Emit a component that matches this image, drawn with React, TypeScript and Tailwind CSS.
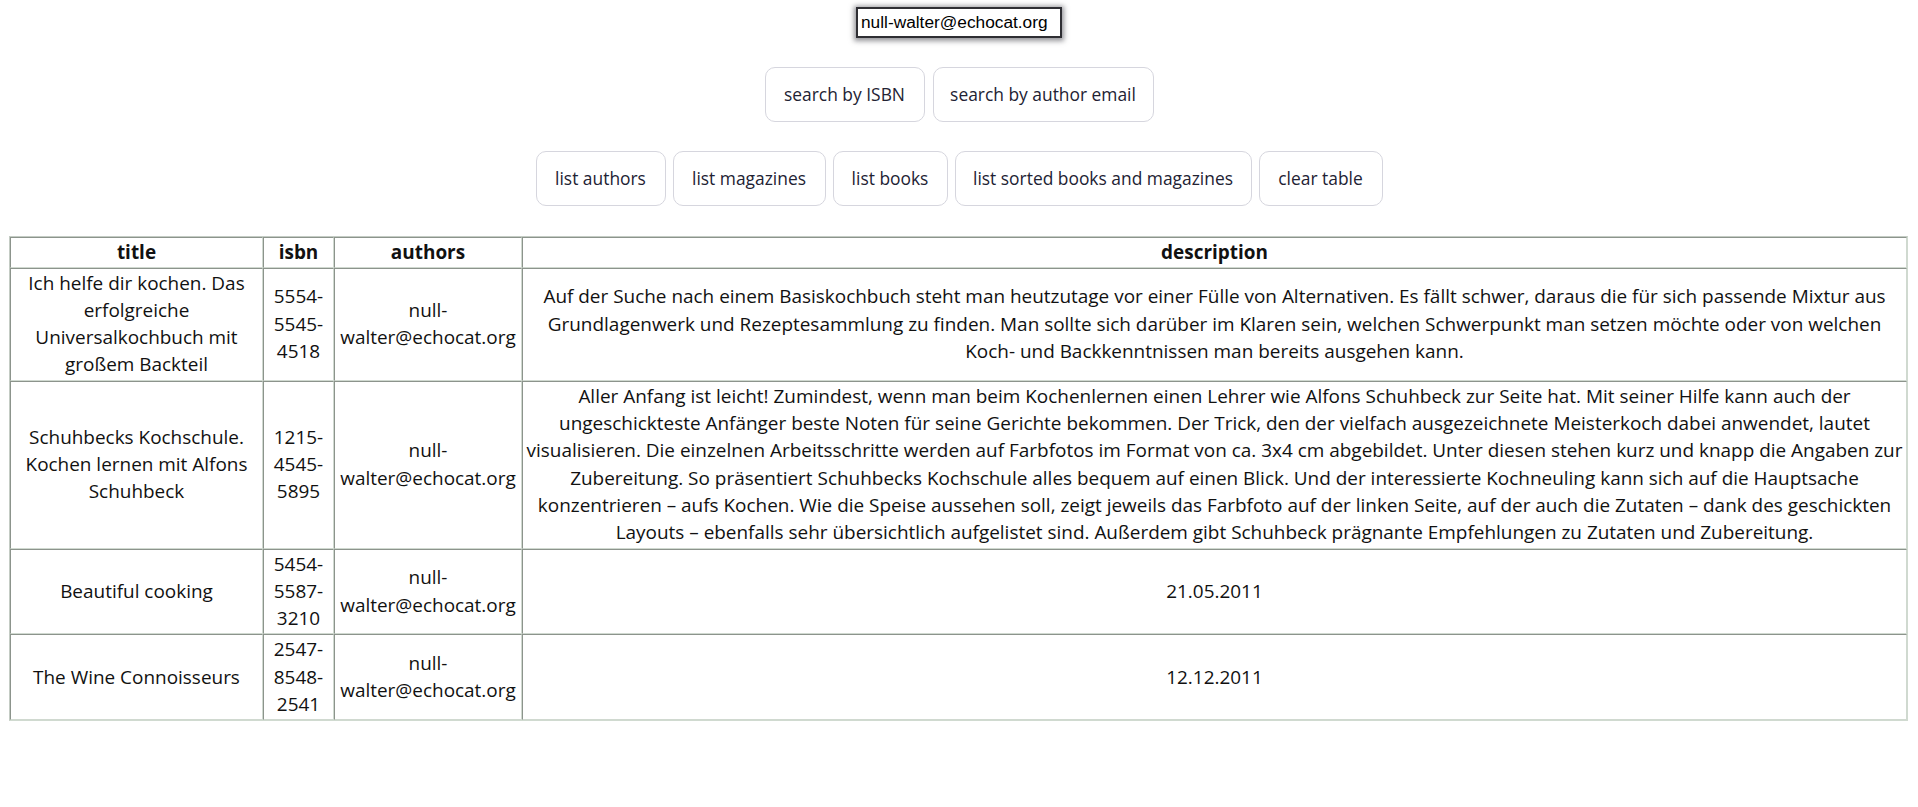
const rows = [
  {
    title: "Ich helfe dir kochen. Das erfolgreiche Universalkochbuch mit großem Backteil",
    isbn: "5554-5545-4518",
    authors: "null-walter@echocat.org",
    description:
      "Auf der Suche nach einem Basiskochbuch steht man heutzutage vor einer Fülle von Alternativen. Es fällt schwer, daraus die für sich passende Mixtur aus Grundlagenwerk und Rezeptesammlung zu finden. Man sollte sich darüber im Klaren sein, welchen Schwerpunkt man setzen möchte oder von welchen Koch- und Backkenntnissen man bereits ausgehen kann.",
  },
  {
    title: "Schuhbecks Kochschule. Kochen lernen mit Alfons Schuhbeck",
    isbn: "1215-4545-5895",
    authors: "null-walter@echocat.org",
    description:
      "Aller Anfang ist leicht! Zumindest, wenn man beim Kochenlernen einen Lehrer wie Alfons Schuhbeck zur Seite hat. Mit seiner Hilfe kann auch der ungeschickteste Anfänger beste Noten für seine Gerichte bekommen. Der Trick, den der vielfach ausgezeichnete Meisterkoch dabei anwendet, lautet visualisieren. Die einzelnen Arbeitsschritte werden auf Farbfotos im Format von ca. 3x4 cm abgebildet. Unter diesen stehen kurz und knapp die Angaben zur Zubereitung. So präsentiert Schuhbecks Kochschule alles bequem auf einen Blick. Und der interessierte Kochneuling kann sich auf die Hauptsache konzentrieren – aufs Kochen. Wie die Speise aussehen soll, zeigt jeweils das Farbfoto auf der linken Seite, auf der auch die Zutaten – dank des geschickten Layouts – ebenfalls sehr übersichtlich aufgelistet sind. Außerdem gibt Schuhbeck prägnante Empfehlungen zu Zutaten und Zubereitung.",
  },
  {
    title: "Beautiful cooking",
    isbn: "5454-5587-3210",
    authors: "null-walter@echocat.org",
    description: "21.05.2011",
  },
  {
    title: "The Wine Connoisseurs",
    isbn: "2547-8548-2541",
    authors: "null-walter@echocat.org",
    description: "12.12.2011",
  },
];

const cell =
  "p-[1px] border border-t-[#8c948c] border-l-[#8c948c] border-b-[#d0d9d0] border-r-[#d0d9d0] text-center align-middle";

function Btn({ label, w }: { label: string; w: string }) {
  return (
    <button
      className={`${w} h-[55px] rounded-[10px] border border-[#d6d6de] bg-white text-[#222233] text-[17.4px] font-medium leading-[27px] flex items-center justify-center`}
    >
      {label}
    </button>
  );
}

export default function App() {
  return (
    <div
      className="min-h-screen bg-white text-[18.95px] leading-[26.6px] text-[#111]"
      style={{ fontFamily: '"Open Sans", "Noto Sans", sans-serif' }}
    >
      {/* Search */}
      <div className="flex justify-center pt-[7px]">
        <input
          defaultValue="null-walter@echocat.org"
          className="w-[206px] h-[31px] px-[3px] border-2 border-[#2e2e33] bg-white text-[17.3px] text-black shadow-[0_1px_5px_2px_rgba(60,60,70,0.55)] outline-none"
          style={{ fontFamily: '"Liberation Sans", Arial, sans-serif' }}
        />
      </div>

      <div className="flex justify-center gap-[8px] mt-[29px]">
        <Btn label="search by ISBN" w="w-[160px]" />
        <Btn label="search by author email" w="w-[221px]" />
      </div>

      <div className="flex justify-center gap-[7px] mt-[29px]">
        <Btn label="list authors" w="w-[130px]" />
        <Btn label="list magazines" w="w-[153px]" />
        <Btn label="list books" w="w-[115px]" />
        <Btn label="list sorted books and magazines" w="w-[297px]" />
        <Btn label="clear table" w="w-[124px]" />
      </div>

      {/* Results */}
      <div className="px-[9px] mt-[30px]">
        <table className="w-[1899px] table-fixed border-separate border-spacing-0 border border-t-[#c4ccc4] border-l-[#c4ccc4] border-b-[#d0dad0] border-r-[#d0dad0]">
          <thead>
            <tr>
              <th className={`${cell} w-[253px] font-bold`}>title</th>
              <th className={`${cell} w-[71px] font-bold`}>isbn</th>
              <th className={`${cell} w-[188px] font-bold`}>authors</th>
              <th className={`${cell} font-bold`}>description</th>
            </tr>
          </thead>
          <tbody className="leading-[27.3px]">
            {rows.map((r) => (
              <tr key={r.isbn}>
                <td className={cell}>{r.title}</td>
                <td className={cell}>{r.isbn}</td>
                <td className={cell}>{r.authors}</td>
                <td className={cell}>{r.description}</td>
              </tr>
            ))}
          </tbody>
        </table>
      </div>
    </div>
  );
}
